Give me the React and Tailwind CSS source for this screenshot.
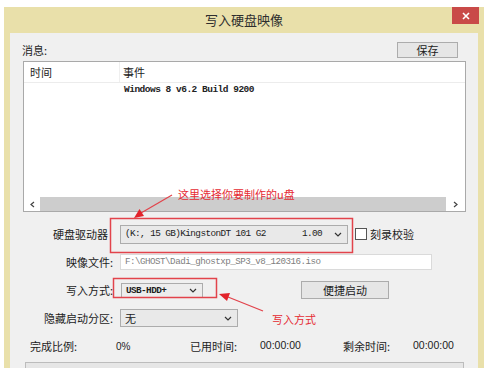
import React from 'react';

const cn = { fontFamily: '"Noto Sans CJK SC", "Liberation Sans", sans-serif' };
const mono = { fontFamily: '"Liberation Mono", monospace' };
const num = { fontFamily: '"Liberation Sans", "Noto Sans CJK SC", sans-serif' };

const Chevron = () => (
    <svg width="8" height="5" viewBox="0 0 8 5" className="shrink-0">
        <polyline points="1,1 4,4 7,1" fill="none" stroke="#333" strokeWidth="1.2" />
    </svg>
);

const Combo = ({ width, height, children, className = '' }) => (
    <div
        className={`flex items-center justify-between border border-[#acacac] bg-[#e9e9e9] pl-[4px] pr-[5px] ${className}`}
        style={{ width, height }}
    >
        <div className="flex-1 flex items-center">{children}</div>
        <Chevron />
    </div>
);

const Label = ({ children, pr = 0 }) => (
    <div className="w-[103px] shrink-0 text-right text-[11px] text-[#1c1c1c]" style={{ ...cn, paddingRight: pr }}>
        {children}
    </div>
);

const App = () => {
    return (
        <div className="relative w-[500px] h-[368px] overflow-hidden bg-white" style={cn}>
            <div className="ml-[4px] mt-[7px] w-[480px] h-[361px] bg-[#e9e0aa] flex flex-col">
                {/* title bar */}
                <div className="relative h-[26px] shrink-0 flex items-center justify-center">
                    <span className="text-[13px] text-[#2e2e2e] -mt-[1px]">写入硬盘映像</span>
                    <div className="absolute right-[5px] top-0 w-[27px] h-[17px] bg-[#c94a48] flex items-center justify-center">
                        <svg width="8" height="8" viewBox="0 0 8 8">
                            <path d="M1 1 L7 7 M7 1 L1 7" stroke="#fff" strokeWidth="1.6" />
                        </svg>
                    </div>
                </div>

                {/* client area */}
                <div className="mx-[6px] flex-1 bg-[#f0f0f0] flex flex-col">
                    <div className="h-[28px] shrink-0 flex items-start justify-between pl-[12px] pr-[20px] pt-[9px]">
                        <span className="text-[11px] leading-[16px] text-[#1c1c1c]">消息:</span>
                        <button className="w-[61px] h-[16px] border border-[#acacac] bg-[#e6e6e6] text-[11px] leading-[14px] text-[#1c1c1c]">
                            保存
                        </button>
                    </div>

                    {/* message list */}
                    <div className="ml-[13px] w-[443px] h-[151px] shrink-0 border border-[#a9a9a9] bg-white flex flex-col">
                        <div className="h-[21px] shrink-0 flex border-b border-[#ececec] text-[11px] text-[#1c1c1c]">
                            <div className="w-[95px] pl-[6px] flex items-center">时间</div>
                            <div className="flex-1 border-l border-[#efefef] pl-[3px] flex items-center">事件</div>
                        </div>
                        <div className="flex-1 pl-[100px] pt-[1px]">
                            <div className="text-[9.5px] tracking-[-0.5px] leading-[12px] font-bold text-[#222]" style={mono}>
                                Windows 8 v6.2 Build 9200
                            </div>
                        </div>
                        <div className="h-[14px] shrink-0 flex items-stretch">
                            <div className="w-[16px] flex items-center justify-center">
                                <svg width="5" height="7" viewBox="0 0 5 7">
                                    <polyline points="4,1 1,3.5 4,6" fill="none" stroke="#444" strokeWidth="1.2" />
                                </svg>
                            </div>
                            <div className="flex-1 bg-[#cdcdcd]" />
                            <div className="w-[19px] flex items-center justify-center">
                                <svg width="5" height="7" viewBox="0 0 5 7">
                                    <polyline points="1,1 4,3.5 1,6" fill="none" stroke="#444" strokeWidth="1.2" />
                                </svg>
                            </div>
                        </div>
                    </div>

                    {/* settings rows */}
                    <div className="mt-[8px] flex flex-col">
                        <div className="h-[28px] flex items-center">
                            <Label pr={5}>硬盘驱动器</Label>
                            <Combo width={228} height={19} className="ml-[7px]">
                                <div className="flex-1 flex justify-between pr-[12px] text-[9.4px] leading-[12px] tracking-[-0.6px] text-[#1c1c1c]" style={mono}>
                                    <span>(K:, 15 GB)KingstonDT 101 G2</span>
                                    <span>1.00</span>
                                </div>
                            </Combo>
                            <div className="ml-[7px] w-[12px] h-[12px] border border-[#555] bg-white" />
                            <span className="ml-[3px] text-[11px] text-[#1c1c1c]">刻录校验</span>
                        </div>

                        <div className="h-[28px] flex items-center">
                            <Label>映像文件:</Label>
                            <div className="ml-[7px] w-[312px] h-[16px] border border-[#dadada] bg-white pl-[4px] flex items-center">
                                <span className="text-[9.2px] tracking-[-0.5px] leading-[12px] text-[#808080]" style={mono}>
                                    F:\GHOST\Dadi_ghostxp_SP3_v8_120316.iso
                                </span>
                            </div>
                        </div>

                        <div className="h-[28px] flex items-center">
                            <Label>写入方式:</Label>
                            <Combo width={82} height={15} className="ml-[8px] bg-[#ededed]">
                                <span className="text-[9.4px] leading-[11px] tracking-[-0.6px] font-bold text-[#1c1c1c]" style={mono}>USB-HDD+</span>
                            </Combo>
                            <button className="ml-[98px] w-[88px] h-[18px] border border-[#acacac] bg-[#e6e6e6] text-[11px] leading-[16px] text-[#1c1c1c]">
                                便捷启动
                            </button>
                        </div>

                        <div className="h-[28px] flex items-center">
                            <Label>隐藏启动分区:</Label>
                            <Combo width={118} height={18} className="ml-[7px]">
                                <span className="text-[11px] leading-[16px] text-[#1c1c1c]">无</span>
                            </Combo>
                        </div>

                        <div className="h-[28px] flex items-center pl-[20px] text-[11px] text-[#1c1c1c]">
                            <span className="w-[86px]">完成比例:</span>
                            <span className="w-[74px] text-[10px]" style={num}>0%</span>
                            <span className="w-[70px]">已用时间:</span>
                            <span className="w-[83px] text-[10.5px]" style={num}>00:00:00</span>
                            <span className="w-[70px]">剩余时间:</span>
                            <span className="text-[10.5px]" style={num}>00:00:00</span>
                        </div>
                    </div>

                    <div className="mt-[2px] ml-[15px] w-[439px] h-[20px] shrink-0 border border-[#bcbcbc] bg-[#e6e6e6]" />
                </div>
            </div>

            {/* red annotations over the dialog */}
            <svg className="absolute inset-0 pointer-events-none" width="500" height="368" viewBox="0 0 500 368">
                <rect x="110.5" y="218.5" width="242" height="34" fill="none" stroke="#e2434b" strokeWidth="1.5" />
                <rect x="113.5" y="278.5" width="103" height="19" fill="none" stroke="#e2434b" strokeWidth="1.5" />
                <line x1="172" y1="195" x2="141" y2="213" stroke="#e2434b" strokeWidth="1.2" />
                <polygon points="134,218 144,216 139.5,209" fill="#e2232b" />
                <line x1="263" y1="311" x2="228" y2="297" stroke="#e2434b" strokeWidth="1.2" />
                <polygon points="219,294 230,293 227,301" fill="#e2232b" />
            </svg>
            <div className="absolute left-[178px] top-[186px] text-[11px] leading-[16px] text-[#e52b33] pointer-events-none">
                这里选择你要制作的u盘
            </div>
            <div className="absolute left-[272px] top-[311px] text-[11px] leading-[16px] text-[#e52b33] pointer-events-none">
                写入方式
            </div>
        </div>
    );
};

export default App;
